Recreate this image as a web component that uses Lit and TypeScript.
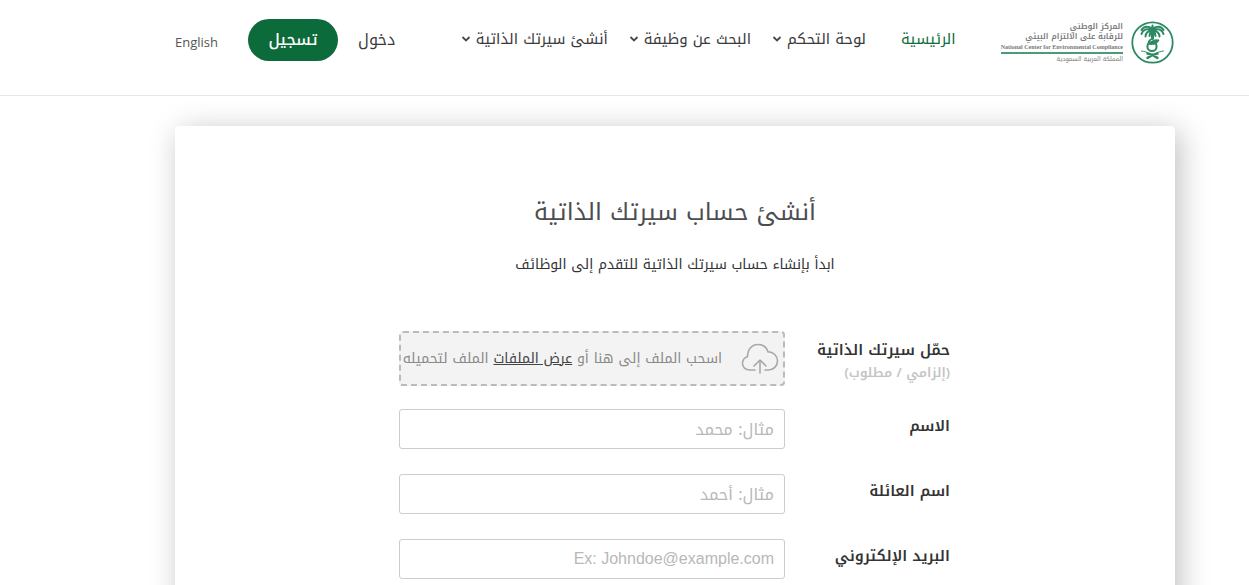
import { LitElement, html, css } from 'lit';
import { customElement } from 'lit/decorators.js';

interface NavItem {
  label: string;
  menu: boolean;
  current?: boolean;
}

interface Field {
  id: string;
  label: string;
  type: string;
  placeholder: string;
}

const NAV: NavItem[] = [
  { label: 'الرئيسية', menu: false, current: true },
  { label: 'لوحة التحكم', menu: true },
  { label: 'البحث عن وظيفة', menu: true },
  { label: 'أنشئ سيرتك الذاتية', menu: true },
];

const FIELDS: Field[] = [
  { id: 'first-name', label: 'الاسم', type: 'text', placeholder: 'مثال: محمد' },
  { id: 'last-name', label: 'اسم العائلة', type: 'text', placeholder: 'مثال: أحمد' },
  { id: 'email', label: 'البريد الإلكتروني', type: 'email', placeholder: 'Ex: Johndoe@example.com' },
];

@customElement('site-logo')
export class SiteLogo extends LitElement {
  static styles = css`
    :host { display: block; }
    .logo { display: flex; align-items: center; gap: 8px; color: #77787a; text-decoration: none; }
    .words { display: flex; flex-direction: column; font-family: 'Noto Kufi Arabic', 'Noto Sans', sans-serif; }
    .ar { font-size: 8px; line-height: 10px; font-weight: 600; }
    .en { font-family: 'Liberation Serif', serif; font-size: 6px; line-height: 10px; font-weight: 700; direction: ltr; text-align: right; border-bottom: 2px solid #4a9c77; white-space: nowrap; }
    .country { font-size: 6px; line-height: 10px; }
    .seal { width: 43px; height: 43px; }
  `;
  render() {
    return html`
      <a class="logo" href="#">
        <svg class="seal" viewBox="0 0 43 43" fill="none" stroke="#2c8a62" stroke-linecap="round" aria-hidden="true">
          <circle cx="21.500" cy="21.500" r="20.200" stroke-width="1.800" />
          <path d="M21.500 7v10.500" stroke-width="3" />
          <path d="M21.500 8C18 4.500 13 5 10.500 9M21.500 8.500C16 7 11.500 9 10.500 13M21.500 9C17 10 14.500 12 14.500 15.500M21.500 9C19.500 11 18.500 13 18.500 15M21.500 8C25 4.500 30 5 32.500 9M21.500 8.500C27 7 31.500 9 32.500 13M21.500 9C26 10 28.500 12 28.500 15.500M21.500 9C23.500 11 24.500 13 24.500 15M21.500 9V4.500" stroke-width="2" />
          <path d="M20 18.500c-2 1-2.500 2.500-2.500 4" stroke-width="1.800" />
          <circle cx="21" cy="25.500" r="4.600" stroke-width="2" />
          <path d="M19 23.500c3.500 0 7 0 9-4.500-4-.5-8 0-9 4.500Z" fill="#2c8a62" stroke-width="1" />
          <path d="M10.500 30c3 .5 5 1 7 2M32.500 30c-3 .5-5 1-7 2" stroke-width="1" />
          <path d="M16.500 32.500c3 .5 7 2 10 4.500M26.500 32.500c-3 .5-7 2-10 4.500" stroke-width="2.400" />
        </svg>
        <span class="words">
          <span class="ar">المركز الوطني</span>
          <span class="ar">للرقابة على الالتزام البيئي</span>
          <span class="en">National Center for Environmental Compliance</span>
          <span class="country">المملكة العربية السعودية</span>
        </span>
      </a>`;
  }
}

@customElement('site-header')
export class SiteHeader extends LitElement {
  static styles = css`
    :host { display: block; border-bottom: 1px solid #e7e7e7; }
    .bar { display: flex; align-items: flex-start; height: 95px; padding-inline: 75px 175px; box-sizing: border-box; white-space: nowrap; }
    .brand { padding-top: 21px; }
    nav { display: flex; gap: 21px; padding-top: 24px; margin-inline-start: 45px; }
    a { color: #3a3a3c; text-decoration: none; font-size: 15px; line-height: 30px; }
    nav a { display: flex; align-items: center; gap: 5px; }
    nav a.current { color: #0c6b3a; margin-inline-end: 14px; }
    .caret { width: 10px; height: 8px; }
    .account { display: flex; align-items: flex-start; margin-inline-start: auto; }
    a.login { margin-top: 25px; font-size: 16px; }
    .register { margin: 19px 20px 0 30px; width: 90px; height: 42px; padding: 0; border: 0; border-radius: 21px; background: #0c6b3a; color: #fff; font: 500 16px/40px 'Noto Kufi Arabic', 'Noto Sans', sans-serif; }
    a.language { margin-top: 27px; font: 13px/30px 'Open Sans', sans-serif; color: #555; }
  `;
  render() {
    return html`
      <header class="bar">
        <site-logo class="brand"></site-logo>
        <nav>
          ${NAV.map(
            (item) => html`<a class=${item.current ? 'current' : ''} href="#">${item.label}
              ${item.menu
                ? html`<svg class="caret" viewBox="0 0 10 8" fill="none" stroke="#4a4a4c" stroke-width="1.800" aria-hidden="true"><path d="M1.500 2 5 5.500 8.500 2" /></svg>`
                : ''}</a>`,
          )}
        </nav>
        <div class="account">
          <a class="login" href="#">دخول</a>
          <button class="register" type="button">تسجيل</button>
          <a class="language" href="#" lang="en">English</a>
        </div>
      </header>`;
  }
}

@customElement('resume-form')
export class ResumeForm extends LitElement {
  static styles = css`
    :host { display: block; }
    .card { margin-inline: 74px 175px; min-height: 600px; padding-top: 66px; box-sizing: border-box; border-radius: 4px; background: #fff; box-shadow: 5px 5px 30px rgba(0, 0, 0, 0.25); }
    h1 { margin: 0; text-align: center; font-size: 24px; line-height: 40px; font-weight: 400; color: #4d4d4f; }
    .intro { margin: 20px 0 0; text-align: center; font-size: 14px; line-height: 26px; color: #333; }
    form { display: flex; flex-direction: column; gap: 25px; margin: 53px 0 0; padding-inline: 225px 224px; }
    .row { display: grid; grid-template-columns: 165px 1fr; }
    .row.upload { margin-bottom: -2px; }
    .label { font-size: 15px; line-height: 34px; font-weight: 600; color: #333; }
    .upload .label { line-height: 24px; padding-top: 7px; }
    .hint { display: block; font-size: 13px; line-height: 22px; color: #c4c4c4; }
    .drop { display: flex; align-items: center; height: 55px; box-sizing: border-box; padding-inline: 4px 0; border: 2px dashed #bbb; border-radius: 4px; background: #f3f3f3; color: #8a8a8a; font-size: 14px; line-height: 24px; white-space: nowrap; }
    .cloud { width: 38px; height: 32px; flex: none; margin-inline-end: 19px; }
    .drop a { color: #444; }
    input { width: 100%; height: 40px; box-sizing: border-box; padding: 0 10px; border: 1px solid #ccc; border-radius: 3px; background: #fff; font: 16px 'Liberation Sans', 'Noto Kufi Arabic', sans-serif; color: #333; text-align: right; }
    input[type='text'] { font-family: 'Noto Kufi Arabic', sans-serif; }
    input::placeholder { color: #b8b8b8; opacity: 1; }
  `;
  render() {
    return html`
      <section class="card">
        <h1>أنشئ حساب سيرتك الذاتية</h1>
        <p class="intro">ابدأ بإنشاء حساب سيرتك الذاتية للتقدم إلى الوظائف</p>
        <form>
          <div class="row upload">
            <div class="label">حمّل سيرتك الذاتية<span class="hint">(إلزامي / مطلوب)</span></div>
            <div class="drop">
              <svg class="cloud" viewBox="0 0 38 32" fill="none" stroke="#a8a8a8" stroke-width="1.600" stroke-linecap="round" stroke-linejoin="round" aria-hidden="true">
                <path d="M14 27H8.500C4.500 27 1.500 24 1.500 20.500c0-3.500 2.500-6 5-6.700C6.500 6 11 1.500 17 1.500c5 0 8.500 2.800 10 7.200 5.500.3 9.500 4 9.500 9.300 0 5-4 9-9 9H24" />
                <path d="M19 30V17M13 23l6-6 6 6" />
              </svg>
              <span>اسحب الملف إلى هنا أو <a href="#">عرض الملفات</a> الملف لتحميله</span>
            </div>
          </div>
          ${FIELDS.map(
            (f) => html`<div class="row">
              <label class="label" for=${f.id}>${f.label}</label>
              <input id=${f.id} type=${f.type} placeholder=${f.placeholder} />
            </div>`,
          )}
        </form>
      </section>`;
  }
}

@customElement('app-root')
export class AppRoot extends LitElement {
  static styles = css`
    :host { display: block; height: 100vh; overflow: hidden; direction: rtl; background: #fff; font-family: 'Noto Kufi Arabic', 'Noto Sans', sans-serif; }
    main { padding-top: 30px; }
  `;
  render() {
    return html`<site-header></site-header><main><resume-form></resume-form></main>`;
  }
}
